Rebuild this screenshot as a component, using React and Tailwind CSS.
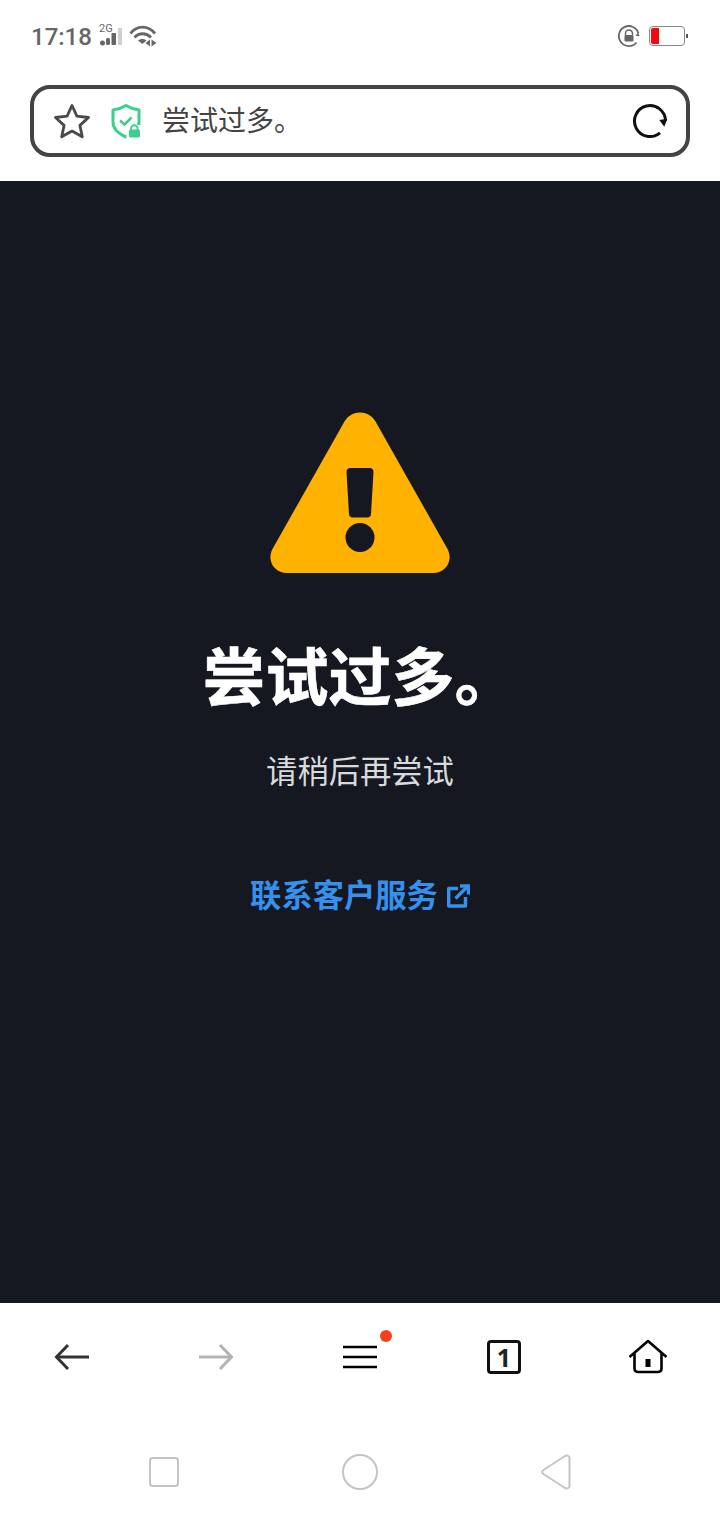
const CJK = { fontFamily: '"Noto Sans CJK SC", "Noto Sans", sans-serif' };

function Signal() {
  return (
    <span className="relative block w-[24px] h-[24px]">
      <span className="absolute left-0 top-[-1px] text-[11px] leading-[12px] text-[#666]" style={{ fontFamily: 'Roboto, sans-serif' }}>2G</span>
      <svg width="24" height="24" viewBox="0 0 24 24" className="absolute left-0 top-0">
        <circle cx="3.500" cy="19" r="2.500" fill="#666" />
        <rect x="7" y="14" width="4" height="7" rx="1.500" fill="#666" />
        <rect x="12.500" y="9" width="4.500" height="12" rx="1" fill="#666" />
        <rect x="19" y="4" width="4" height="17" fill="#cfcfcf" />
      </svg>
    </span>
  );
}

function Wifi() {
  return (
    <svg width="30" height="24" viewBox="0 0 30 24" fill="none">
      <path d="M2.500 9.500C9 1 20 1 27 9.500" stroke="#666" strokeWidth="2.800" />
      <path d="M6.500 13.500C11 8.500 18 8.500 23 13.500" stroke="#666" strokeWidth="2.800" />
      <path d="M10 16.500C12.500 14.500 16.500 14.500 18.500 16.500L14.500 20Z" fill="#666" />
      <path d="M22 15.500V22.500L17.500 19Z" fill="#666" />
      <path d="M23.500 15.500V22.500L28.500 19Z" fill="#666" />
    </svg>
  );
}

function RotationLock() {
  return (
    <svg width="22" height="22" viewBox="0 0 22 22" fill="none">
      <path d="M18.500 17.500A10 10 0 1 1 20.500 8.500" stroke="#666" strokeWidth="1.800" />
      <path d="M21.500 11H17.500L20 7.500Z" fill="#666" />
      <path d="M7.500 10V8.500A3.300 3.300 0 0 1 14.500 8.500V10" stroke="#666" strokeWidth="1.500" />
      <rect x="6.500" y="10" width="9" height="6.500" rx="1" fill="#666" />
    </svg>
  );
}

function Battery() {
  return (
    <span className="flex items-center gap-[1px]">
      <span className="flex w-[36px] h-[20px] rounded-[4px] border border-[#888] p-[1px] overflow-hidden">
        <span className="block w-[8px] h-full rounded-l-[2px] bg-[#ee0a0e]" />
      </span>
      <span className="block w-[2px] h-[4px] bg-[#555]" />
    </span>
  );
}

function Star() {
  return (
    <svg width="38" height="36" viewBox="0 0 38 36" fill="none">
      <path d="M19 2.500L23.900 13.200L35.500 14.500L26.900 22.400L29.300 33.800L19 28L8.700 33.800L11.100 22.400L2.500 14.500L14.100 13.200Z" stroke="#4a4a4a" strokeWidth="2.800" strokeLinejoin="round" />
    </svg>
  );
}

function Shield() {
  return (
    <svg width="32" height="36" viewBox="0 0 32 36" fill="none">
      <path d="M16 2.500C20 5 25 6.500 29 7V19C29 26 23 31 16 34C9 31 3 26 3 19V7C7 6.500 12 5 16 2.500Z" stroke="#3ccf8e" strokeWidth="3" strokeLinejoin="round" />
      <path d="M10 17.500L14.500 21.500L21.500 14.500" stroke="#3ccf8e" strokeWidth="2.500" />
      <rect x="16.500" y="22" width="15" height="14" fill="#fff" />
      <path d="M21 27V25.500A3.200 3.200 0 0 1 27.500 25.500V27" stroke="#3ccf8e" strokeWidth="1.800" />
      <rect x="19" y="26.500" width="11" height="8" rx="1.500" fill="#3ccf8e" />
    </svg>
  );
}

function Refresh() {
  return (
    <svg width="36" height="36" viewBox="0 0 36 36" fill="none">
      <path d="M33.500 18A15.500 15.500 0 1 0 28 29.900" stroke="#111" strokeWidth="3" />
      <path d="M27.300 17L35.300 15.700L32.300 23.700Z" fill="#111" />
    </svg>
  );
}

function Warning() {
  return (
    <svg width="182" height="162" viewBox="0 0 182 162">
      <path fillRule="evenodd" fill="#ffb300" d="M75.500 9.500C82.500-2.500 99.500-2.500 106.500 9.500L178.500 137C184.500 148.500 177 161 164 161H18C5 161-2.500 148.500 3.500 137Z" />
      <path fill="#151820" d="M77.500 60C77.500 57.500 79 56 81.500 56H100.500C103 56 104.500 57.500 104.500 60L102 102C102 104 100.500 105.500 98.500 105.500H83.500C81.500 105.500 80 104 80 102Z" />
      <circle cx="91" cy="125.500" r="14.500" fill="#151820" />
    </svg>
  );
}

function External() {
  return (
    <svg width="24" height="26" viewBox="0 0 24 26" fill="none" stroke="#3491ee" strokeWidth="3.400" className="mt-[4px]">
      <path d="M12 5.500H2.700V23H19.500V14" strokeLinejoin="round" />
      <path d="M9.500 15.500L21 4" />
      <path d="M14 3H22.500V11.500" />
    </svg>
  );
}

function Arrow({ color, flip }) {
  return (
    <svg width="36" height="28" viewBox="0 0 36 28" fill="none" stroke={color} strokeWidth="3" className={flip ? 'scale-x-[-1]' : ''}>
      <path d="M14 2L2.500 14L14 26" />
      <path d="M2.500 14H35" />
    </svg>
  );
}

function Menu() {
  return (
    <span className="relative block">
      <svg width="36" height="24" viewBox="0 0 36 24" fill="none" stroke="#000" strokeWidth="2.600">
        <path d="M1 2H35M1 12H35M1 22H35" />
      </svg>
      <span className="absolute right-[-14px] top-[-15px] w-[12px] h-[12px] rounded-full bg-[#f63f1f]" />
    </span>
  );
}

function Tabs() {
  return (
    <span className="flex items-center justify-center w-[34px] h-[34px] rounded-[4px] border-[3px] border-[#111] text-[25px] font-bold text-[#222]" style={{ fontFamily: '"Noto Sans", sans-serif' }}>
      <span className="leading-none">1</span>
    </span>
  );
}

function Home() {
  return (
    <svg width="40" height="36" viewBox="0 0 40 36" fill="none" stroke="#000" strokeWidth="2.600">
      <path d="M1.500 18L20 2L38.500 18" strokeLinejoin="round" />
      <path d="M6.500 14V29.500C6.500 32 8 33 10.500 33H29.500C32 33 33.500 32 33.500 29.500V14" />
      <rect x="17.500" y="20" width="5" height="8" fill="#000" stroke="none" />
    </svg>
  );
}

export default function App() {
  return (
    <div className="w-[720px] h-[1520px] flex flex-col bg-white overflow-hidden" style={CJK}>
      <header className="h-[181px] shrink-0 bg-white">
        <div className="h-[72px] flex items-center justify-between pl-[31px] pr-[32px]">
          <div className="flex items-center">
            <span className="w-[68px] pt-[2px] text-[24px] font-medium text-[#666] leading-none" style={{ fontFamily: 'Roboto, sans-serif' }}>17:18</span>
            <Signal />
            <span className="ml-[5px]"><Wifi /></span>
          </div>
          <div className="flex items-center gap-[9px]">
            <RotationLock />
            <Battery />
          </div>
        </div>
        <div className="mx-[30px] mt-[13px] h-[72px] rounded-[20px] border-[4px] border-[#444] flex items-center pl-[19px] pr-[18px]">
          <Star />
          <span className="ml-[19px]"><Shield /></span>
          <span className="ml-[20px] flex-1 pb-[4px] text-[28px] text-[#444] leading-none">尝试过多。</span>
          <Refresh />
        </div>
      </header>

      <main className="flex-1 bg-[#151820] flex flex-col items-center pt-[231px]">
        <Warning />
        <h1 className="mt-[53px] text-[63px] leading-[92px] font-bold text-white [-webkit-text-stroke:0.6px_#fff]">尝试过多。</h1>
        <p className="mt-[28px] text-[31.300px] leading-[46px] text-[#d8dadd]">请稍后再尝试</p>
        <a className="mt-[78px] flex items-center gap-[8px] text-[31.300px] leading-[46px] font-bold text-[#3491ee]">
          联系客户服务
          <External />
        </a>
      </main>

      <footer className="h-[217px] shrink-0 bg-white flex flex-col">
        <nav className="h-[108px] grid grid-cols-5 place-items-center">
          <Arrow color="#333" />
          <Arrow color="#b3b3b3" flip />
          <Menu />
          <Tabs />
          <Home />
        </nav>
        <div className="mt-[43px] h-[36px] flex items-center justify-center gap-[163px]">
          <span className="block w-[30px] h-[30px] rounded-[4px] border-2 border-[#c4c4c4]" />
          <span className="block w-[36px] h-[36px] rounded-full border-2 border-[#c4c4c4]" />
          <svg width="30" height="36" viewBox="0 0 30 36" fill="none" stroke="#c4c4c4" strokeWidth="2">
            <path d="M2.500 16L24 2C26 1 28.500 2 28.500 4V32C28.500 34 26 35 24 34L2.500 20C.8 19 .8 17 2.500 16Z" />
          </svg>
        </div>
      </footer>
    </div>
  );
}
